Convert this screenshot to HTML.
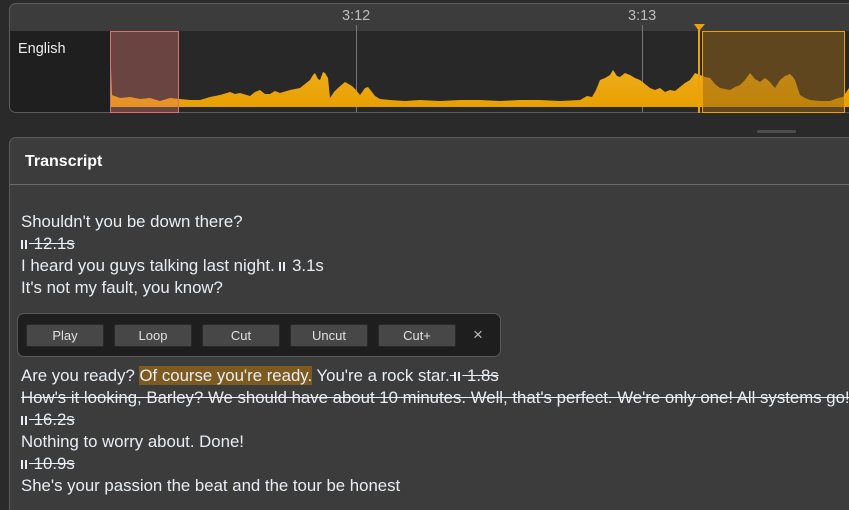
<!DOCTYPE html>
<html style="width:849px;height:510px;overflow:hidden"><head><meta charset="utf-8"><style>
*{margin:0;padding:0;box-sizing:border-box}
body{width:849px;height:510px;background:#2a2a2a;position:relative;overflow:hidden;font-family:"Liberation Sans",sans-serif;color:#e8eef4}
.abs{position:absolute}
.tl{left:9px;top:3px;width:850px;height:110px;border:1px solid #5c5c5c;border-radius:7px;background:#3c3c3c;overflow:hidden}
.tick{font-size:14.5px;color:#bdbdbd;position:absolute;top:8px}
.tp{left:9px;top:137px;width:850px;height:373px;border:1px solid #5c5c5c;border-bottom:none;border-radius:7px 7px 0 0;background:#3c3c3c}
.line{position:absolute;left:21px;font-size:16.8px;line-height:22px;white-space:nowrap}
.s{text-decoration:line-through}
.btn{position:absolute;top:324px;width:78px;height:23px;background:#474747;border:1px solid #2a2a2a;border-radius:2px;font-size:13px;text-align:center;line-height:21px;color:#e0e0e0}
.p{display:inline-block;height:9px;border-left:2px solid currentColor;border-right:2px solid currentColor;box-sizing:content-box;width:2px;margin-right:2px;vertical-align:0}
</style></head><body>
<div class="abs tl">
  <div class="abs" style="left:0;top:27px;width:100px;height:90px;background:#1f1f1f"></div>
  <div class="abs" style="left:100px;top:27px;width:750px;height:90px;background:#282828"></div>
  <div class="abs" style="left:8px;top:37px;font-size:14.5px;color:#eee">English</div>
</div>
<div class="tick" style="left:342px">3:12</div>
<div class="tick" style="left:628px">3:13</div>
<svg class="abs" style="left:0;top:0" width="849" height="115">
 <line x1="356.5" y1="25" x2="356.5" y2="112" stroke="#777" stroke-width="1"/>
 <line x1="642.5" y1="25" x2="642.5" y2="112" stroke="#777" stroke-width="1"/>
 <defs><linearGradient id="g" x1="0" y1="0" x2="0" y2="1"><stop offset="0" stop-color="#f2b530"/><stop offset="1" stop-color="#e8a000"/></linearGradient></defs>
 <polygon fill="url(#g)" points="110,107 110,42 112,95 120,98 130,97 140,99 150,98 160,101 170,98 180,99 190,100 200,100 210,97 220,95 230,92 235,94 240,93 250,96 255,92 260,90 265,94 270,94 275,91 280,93 290,90 300,88 305,84 310,80 313,75 315,73 318,79 320,80 323,72 325,73 328,78 330,98 334,92 338,88 345,82 352,86 356,90 360,95 365,88 368,87 372,92 375,96 380,99 390,100 405,101 420,100 440,101 460,100 480,100 500,101 520,100 540,100 560,101 580,100 587,96 592,97 596,90 600,80 605,78 610,75 613,70 617,76 620,77 625,73 630,75 635,78 640,80 645,84 650,88 655,90 660,88 665,92 670,90 675,91 680,87 685,83 690,80 695,73 700,75 705,77 710,78 715,84 720,88 725,89 730,90 735,87 740,85 745,80 750,73 755,79 760,82 765,78 770,82 775,88 780,80 785,76 790,74 793,77 795,80 800,95 805,98 810,100 820,101 830,101 838,98 843,97 849,88 849,107"/>
 <rect x="110.5" y="31.5" width="68" height="81" fill="rgba(230,120,110,0.35)" stroke="#e07070"/>
 <rect x="702.5" y="31.5" width="142" height="81" fill="rgba(150,100,20,0.5)" stroke="#f0a000"/>
 <rect x="698" y="30" width="2" height="83" fill="#f0a000"/>
 <polygon points="694,24 705,24 699,31" fill="#f0a000"/>
</svg>
<div class="abs" style="left:757px;top:130px;width:39px;height:3px;border-radius:2px;background:#4e4e4e"></div>
<div class="abs tp">
  <div class="abs" style="left:15px;top:15px;font-size:16px;font-weight:bold;color:#fff">Transcript</div>
  <div class="abs" style="left:0;top:46px;width:850px;height:1px;background:#6a6a6a"></div>
</div>
<div class="line" style="top:211px">Shouldn't you be down there?</div>
<div class="line s" style="top:233px"><span class="p"></span> 12.1s</div>
<div class="line" style="top:255px">I heard you guys talking last night. <span class="p"></span> 3.1s</div>
<div class="line" style="top:277px">It's not my fault, you know?</div>
<div class="abs" style="left:17px;top:313px;width:484px;height:44px;background:#1e1e1e;border:1px solid #5a5a5a;border-radius:7px"></div>
<div class="btn" style="left:26px">Play</div>
<div class="btn" style="left:114px">Loop</div>
<div class="btn" style="left:202px">Cut</div>
<div class="btn" style="left:290px">Uncut</div>
<div class="btn" style="left:378px">Cut+</div>
<div class="abs" style="left:473px;top:325px;font-size:17px;color:#bbb">×</div>
<div class="line" style="top:365px">Are you ready? <span style="background:#7d5a20">Of course you're ready.</span> You're a rock star.<span class="s"> <span class="p"></span> 1.8s</span></div>
<div class="line s" style="top:387px">How's it looking, Barley? We should have about 10 minutes. Well, that's perfect. We're only one! All systems go!</div>
<div class="line s" style="top:409px"><span class="p"></span> 16.2s</div>
<div class="line" style="top:431px">Nothing to worry about. Done!</div>
<div class="line s" style="top:453px"><span class="p"></span> 10.9s</div>
<div class="line" style="top:475px">She's your passion the beat and the tour be honest</div>
</body></html>
